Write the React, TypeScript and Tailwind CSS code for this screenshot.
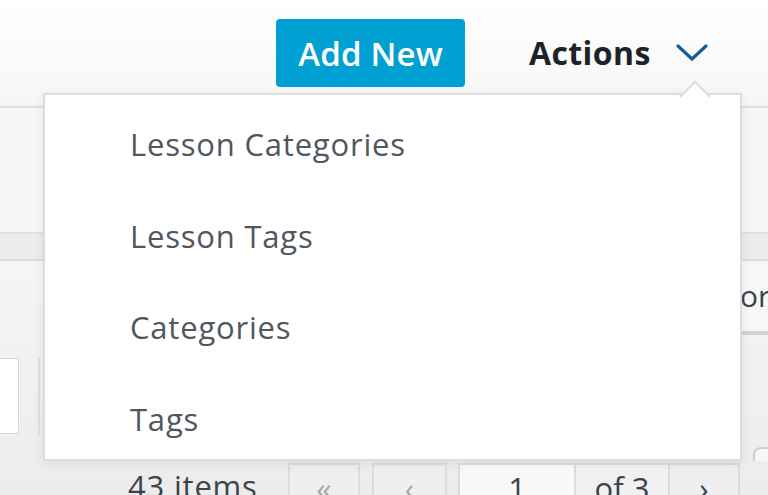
import * as React from "react";

const menuItems = ["Lesson Categories", "Lesson Tags", "Categories", "Tags"];

function Chevron({ className }: { className?: string }) {
  return (
    <svg viewBox="0 0 32 18" className={className} fill="none" stroke="currentColor" strokeWidth={3.2} strokeLinecap="round" strokeLinejoin="round">
      <path d="M2 2 L16 15 L30 2" />
    </svg>
  );
}

export default function App() {
  return (
    <div
      className="relative w-[768px] h-[495px] overflow-hidden bg-gradient-to-b from-white to-[#ececec] text-[#50575e]"
      style={{ fontFamily: '"Open Sans", "Noto Sans", sans-serif' }}
    >
      {/* page header */}
      <div className="h-[108px] flex items-start pl-[276px] pt-[19px] bg-gradient-to-b from-white to-[#f6f6f6] border-b-2 border-[#e0e0e0]">
        <button className="w-[189px] h-[68px] rounded-[4px] bg-[#00a0d2] text-white text-[33px] font-semibold tracking-[0.2px] leading-none">
          Add New
        </button>
        <div className="ml-[64px] h-[68px] flex items-center gap-[25px]">
          <span className="text-[32px] font-bold text-[#1d2327] tracking-[0.4px]">Actions</span>
          <Chevron className="w-[32px] h-[18px] text-[#135e96]" />
        </div>
      </div>

      {/* filter band */}
      <div className="h-[126px] bg-[#f6f6f6] border-b-2 border-[#e2e2e2]" />

      <div className="h-[27px] bg-[#ececec] border-b-2 border-[#dedede]" />

      <div className="flex h-[200px]">
        <div className="flex-1 flex">
          <div className="mt-[97px] w-[19px] h-[76px] bg-white border border-l-0 border-[#d6d6d6]" />
          <div className="ml-[19px] mt-[97px] w-[2px] h-[78px] bg-[#e0e0e0]" />
        </div>
        <div className="w-[26px] flex flex-col">
          <div className="h-[74px] bg-[#f7f7f7] border-b-4 border-[#d4d4d4] flex items-center text-[30px] text-[#3c434a] leading-none">
            <span className="ml-[-2px]">or</span>
          </div>
          <div className="mt-[112px] ml-[11px] flex-1 rounded-tl-[8px] border-l-2 border-t-2 border-[#d0d0d0] bg-[#f7f7f7]" />
        </div>
      </div>

      {/* pagination row */}
      <div className="absolute left-0 top-[463px] flex h-[40px] items-start text-[31px] leading-none text-[#3c434a]">
        <span className="ml-[128px] mt-[8px] w-[160px] tracking-[0.8px]">43 items</span>
        <span className="w-[72px] h-[40px] bg-[#efefef] border-x-2 border-t-2 border-[#dcdcdc] flex justify-center pt-[8px] text-[#a7aaad]">«</span>
        <span className="ml-[12px] w-[75px] h-[40px] bg-[#efefef] border-x-2 border-t-2 border-[#dcdcdc] flex justify-center pt-[8px] text-[#a7aaad]">‹</span>
        <span className="ml-[11px] w-[118px] h-[40px] bg-[#f9f9f9] border-x-2 border-t-2 border-[#dcdcdc] flex justify-center pt-[8px]">1</span>
        <span className="w-[92px] h-[40px] bg-[#f1f1f1] border-t-2 border-[#dcdcdc] flex justify-center pt-[8px]">of 3</span>
        <span className="w-[72px] h-[40px] bg-[#efefef] border-x-2 border-t-2 border-[#dcdcdc] flex justify-center pt-[8px]">›</span>
      </div>

      {/* actions dropdown */}
      <div className="absolute left-[43px] top-[93px] w-[699px] h-[368px] bg-white border-2 border-[#dcdcde] shadow-[0_2px_10px_rgba(0,0,0,0.08)]">
        <div className="absolute left-[639px] top-[-10px] w-[22px] h-[22px] rotate-45 bg-white border-l-2 border-t-2 border-[#dcdcde]" />
        <ul className="relative pt-[31px]">
          {menuItems.map((item) => (
            <li key={item} className="h-[91.5px] pl-[85px] text-[31px] tracking-[0.8px] leading-[36px] text-[#50575e]">
              {item}
            </li>
          ))}
        </ul>
      </div>
    </div>
  );
}
